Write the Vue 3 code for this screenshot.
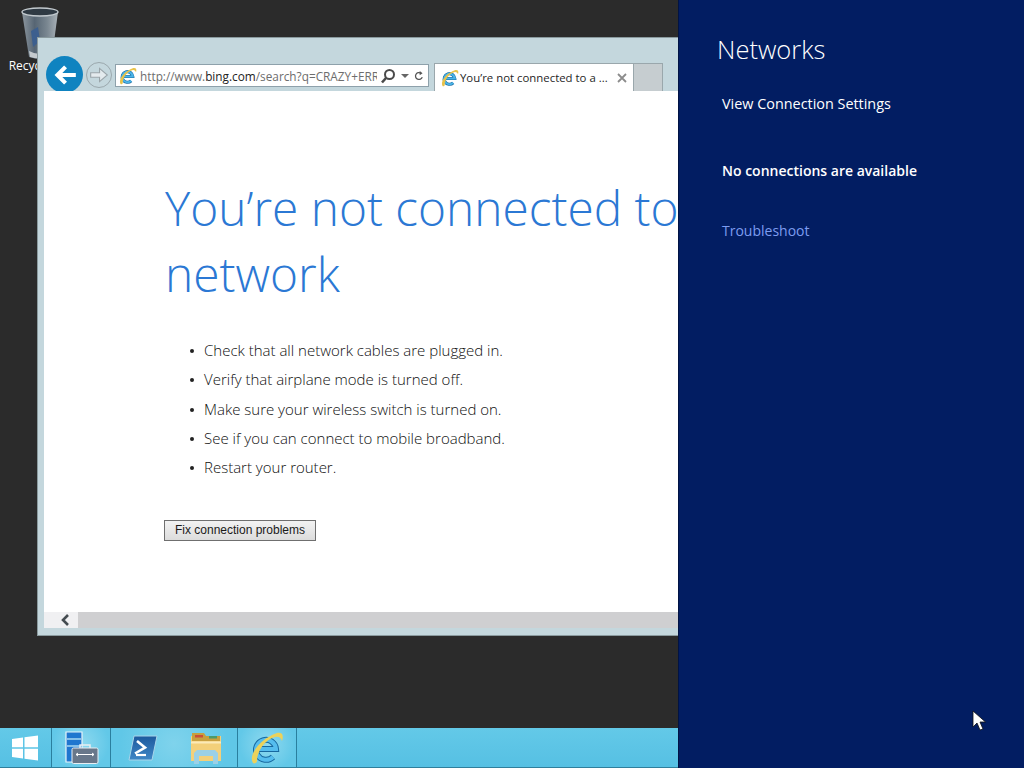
<template>
  <div class="screen">
    <div class="left">
      <main class="desktop">
        <div class="recycle">
          <svg width="40" height="52" viewBox="0 0 40 52">
            <defs>
              <linearGradient id="bin" x1="0" x2="1" y1="0" y2="0">
                <stop offset="0" stop-color="#8d979f"/><stop offset=".35" stop-color="#566573"/><stop offset=".7" stop-color="#7a8791"/><stop offset="1" stop-color="#aab2b8"/>
              </linearGradient>
            </defs>
            <path d="M2 5 L38 5 L32 50 Q20 54 9 50 Z" fill="url(#bin)"/>
            <ellipse cx="20" cy="5" rx="18" ry="4" fill="#2f3a44" stroke="#c2c9ce" stroke-width="1.4"/>
            <path d="M11 24 L18 20 L20 34 L13 40 Z" fill="#3c5f8e"/>
            <path d="M9 44 Q20 50 31 44 L30 50 Q20 53 10 50 Z" fill="#c4cace"/>
          </svg>
          <span class="recycle-label">Recycle Bin</span>
        </div>

        <section class="window">
          <div class="toolbar">
            <div class="back">
              <svg width="26" height="26" viewBox="0 0 24 24"><path d="M22 12H6M12.500 4.500 5 12l7.500 7.500" fill="none" stroke="#fff" stroke-width="3.800"/></svg>
            </div>
            <div class="forward">
              <svg width="20" height="20" viewBox="0 0 18 18"><path d="M1.500 7h8V3l7 6-7 6v-4h-8z" fill="#e4ebee" stroke="#9aa5aa" stroke-width="1"/></svg>
            </div>
            <div class="address">
              <svg class="ie" width="18" height="18" viewBox="0 0 34 34">
                <path d="M8 18h18a10 10 0 1 0-3 8" fill="none" stroke="#17689f" stroke-width="6"/>
                <path d="M8 18h18a10 10 0 1 0-3 8" fill="none" stroke="#4ab4e8" stroke-width="4"/>
                <path d="M3 32C-2 25 9 8 27 2c5-1 7 2 5 8-1-3-3-5-7-4C14 9 7 21 7 30c0 2-3 3-4 2Z" fill="#e8c34a"/>
              </svg>
              <span class="url">http://www.<b>bing.com</b>/search?q=CRAZY+ERROR</span>
              <svg class="mag" width="16" height="16" viewBox="0 0 16 16"><circle cx="9.500" cy="6.500" r="4.500" fill="none" stroke="#4a4a4a" stroke-width="2"/><path d="M6 10 2 14.500" stroke="#4a4a4a" stroke-width="2.600"/></svg>
              <span class="caret"></span>
              <svg width="14" height="14" viewBox="0 0 14 14"><path d="M11.500 8.500A4.800 4.800 0 1 1 9.500 3" fill="none" stroke="#555" stroke-width="1.800"/><path d="M8 0v6l4-3z" fill="#555"/></svg>
            </div>
            <div class="tab">
              <svg class="ie" width="18" height="18" viewBox="0 0 34 34">
                <path d="M8 18h18a10 10 0 1 0-3 8" fill="none" stroke="#17689f" stroke-width="6"/>
                <path d="M8 18h18a10 10 0 1 0-3 8" fill="none" stroke="#4ab4e8" stroke-width="4"/>
                <path d="M3 32C-2 25 9 8 27 2c5-1 7 2 5 8-1-3-3-5-7-4C14 9 7 21 7 30c0 2-3 3-4 2Z" fill="#e8c34a"/>
              </svg>
              <span class="tab-title">You’re not connected to a ...</span>
              <svg width="10" height="10" viewBox="0 0 10 10"><path d="M1 1l8 8M9 1 1 9" stroke="#8c8c8c" stroke-width="1.800"/></svg>
            </div>
            <div class="newtab"></div>
          </div>

          <div class="page">
            <h1>You’re not connected to a network</h1>
            <ul>
              <li v-for="tip in tips" :key="tip">{{ tip }}</li>
            </ul>
            <button class="fix">Fix connection problems</button>
          </div>

          <div class="scrollbar">
            <div class="scroll-left">
              <svg width="10" height="12" viewBox="0 0 10 12"><path d="M8 1 3 6l5 5" fill="none" stroke="#444b50" stroke-width="2.600"/></svg>
            </div>
            <div class="scroll-track"></div>
          </div>
        </section>
      </main>

      <footer class="taskbar">
        <div class="task start">
          <svg width="28" height="28" viewBox="0 0 28 28"><path d="M1 5 12 3.500V13.300H1zM13.500 3.300 27 1.500V13.300H13.500zM1 14.800H12V24.500L1 23zM13.500 14.800H27V26.500L13.500 24.700z" fill="#fff"/></svg>
        </div>
        <div class="task server">
          <svg width="34" height="34" viewBox="0 0 34 34">
            <path d="M1 1h16v30H1z" fill="#1f76cf" stroke="#e6f3fa" stroke-width="1.200"/>
            <path d="M2 8h14M2 15h14" stroke="#a6d8f2" stroke-width="1.400"/>
            <rect x="7" y="17" width="26" height="15.500" rx="1.500" fill="#68778a" stroke="#e8eef2" stroke-width="1"/>
            <path d="M15 17v-3h10v3" fill="none" stroke="#e8eef2" stroke-width="1.500"/>
            <path d="M11 23.500h18M11 23.500l2-1.500M11 23.500l2 1.500M29 23.500l-2-1.500M29 23.500l-2 1.500" stroke="#fff" stroke-width="1" fill="none"/>
          </svg>
        </div>
        <div class="task group">
          <svg width="30" height="26" viewBox="0 0 30 26">
            <defs>
              <linearGradient id="ps" x1="0" x2="0" y1="0" y2="1"><stop offset="0" stop-color="#1d5a9e"/><stop offset="1" stop-color="#3f87c6"/></linearGradient>
            </defs>
            <path d="M6 1h23l-5 24H1z" fill="url(#ps)" stroke="#a9d5ea" stroke-width="1"/>
            <path d="M9 6l8 6.500-10 6" fill="none" stroke="#fff" stroke-width="2.600"/>
            <path d="M8 20h10" stroke="#fff" stroke-width="2.200"/>
          </svg>
          <svg width="32" height="32" viewBox="0 0 32 32">
            <path d="M1 4h30v25H1z" fill="#f3d07a"/>
            <path d="M2 1h12l2 3h14v5H2z" fill="#c79f3f"/>
            <rect x="5" y="3" width="8" height="2.500" fill="#c94f3a"/>
            <rect x="19" y="4" width="8" height="2.500" fill="#4c9a6a"/>
            <path d="M1 10.500h30" stroke="#fbeab8" stroke-width="2"/>
            <path d="M4 32V21l3-3h18l3 3v11h-5v-8H9v8z" fill="#9bd0e6"/>
          </svg>
        </div>
        <div class="task ie-task">
          <svg width="34" height="34" viewBox="0 0 34 34">
            <path d="M8 18h18a10 10 0 1 0-3 8" fill="none" stroke="#17689f" stroke-width="6"/>
            <path d="M8 18h18a10 10 0 1 0-3 8" fill="none" stroke="#55bdee" stroke-width="4"/>
            <path d="M3 32C-2 25 9 8 27 2c5-1 7 2 5 8-1-3-3-5-7-4C14 9 7 21 7 30c0 2-3 3-4 2Z" fill="#edd25a"/>
          </svg>
        </div>
      </footer>
    </div>

    <aside class="charm">
      <h2>Networks</h2>
      <a class="settings">View Connection Settings</a>
      <p class="status">No connections are available</p>
      <a class="troubleshoot">Troubleshoot</a>
      <svg class="cursor" width="14" height="22" viewBox="0 0 14 22"><path d="M1 1v16l4-4 3 7 3-1-3-7h5.500z" fill="#fff" stroke="#111" stroke-width=".8"/></svg>
    </aside>
  </div>
</template>

<script setup>
const tips = [
  'Check that all network cables are plugged in.',
  'Verify that airplane mode is turned off.',
  'Make sure your wireless switch is turned on.',
  'See if you can connect to mobile broadband.',
  'Restart your router.'
]
</script>

<style>
html, body { margin: 0; background: #2b2b2b; overflow: hidden; }
</style>

<style scoped>
.screen {
  width: 1024px;
  height: 768px;
  display: flex;
  overflow: hidden;
  font-family: "Open Sans", "Noto Sans", sans-serif;
}
.left {
  width: 678px;
  flex: none;
  display: flex;
  flex-direction: column;
}
.desktop {
  flex: 1;
  position: relative;
  background: #2b2b2b;
  overflow: hidden;
}
.recycle {
  position: absolute;
  left: 2px;
  top: 7px;
  width: 76px;
  display: flex;
  flex-direction: column;
  align-items: center;
  color: #fff;
  font-size: 12px;
}
.recycle-label { margin-top: -2px; white-space: nowrap; }
.window {
  position: absolute;
  left: 37px;
  top: 37px;
  width: 660px;
  height: 599px;
  box-sizing: border-box;
  background: #c4d7dd;
  border: 1px solid #8a9a9e;
  border-right: 0;
  padding: 0 0 7px 6px;
  display: flex;
  flex-direction: column;
}
.toolbar {
  height: 53px;
  flex: none;
  position: relative;
}
.back {
  position: absolute;
  left: 2px;
  top: 18px;
  width: 37px;
  height: 37px;
  border-radius: 50%;
  background: #0f83c0;
  display: flex;
  align-items: center;
  justify-content: center;
  clip-path: inset(0 0 2px 0);
}
.forward {
  position: absolute;
  left: 42px;
  top: 24px;
  width: 26px;
  height: 26px;
  box-sizing: border-box;
  border: 1px solid #9ba8ad;
  border-radius: 50%;
  display: flex;
  align-items: center;
  justify-content: center;
}
.address {
  position: absolute;
  left: 71px;
  top: 26px;
  width: 314px;
  height: 23px;
  box-sizing: border-box;
  border: 1px solid #8ea1ab;
  background: #fff;
  display: flex;
  align-items: center;
  padding: 0 4px 0 3px;
}
.address .ie { flex: none; margin-right: 3px; }
.url {
  width: 237px;
  flex: none;
  overflow: hidden;
  white-space: nowrap;
  font-size: 11.800px;
  color: #6d6d6d;
  margin-right: 3px;
}
.url b { color: #222; font-weight: 400; }
.mag { flex: none; margin-right: 0; }
.caret {
  width: 0;
  height: 0;
  margin: 1px 5px 0 5px;
  border-left: 4px solid transparent;
  border-right: 4px solid transparent;
  border-top: 4px solid #666;
}
.tab {
  position: absolute;
  left: 390px;
  top: 25px;
  width: 200px;
  height: 28px;
  box-sizing: border-box;
  background: #fff;
  border: 1px solid #9aa7ac;
  border-bottom: 0;
  display: flex;
  align-items: center;
  padding: 0 6px 0 6px;
}
.tab .ie { flex: none; margin-right: 1px; }
.tab-title {
  font-size: 11.400px;
  color: #1f1f1f;
  white-space: nowrap;
  flex: 1;
}
.newtab {
  position: absolute;
  left: 590px;
  top: 25px;
  width: 29px;
  height: 28px;
  box-sizing: border-box;
  background: #c6cdd0;
  border: 1px solid #9aa7ac;
  border-left: 0;
  border-bottom: 0;
}
.page {
  flex: 1;
  background: #fff;
  overflow: hidden;
  padding: 0 0 0 120px;
  min-height: 0;
  position: relative;
}
h1 {
  margin: 84px 0 0 1px;
  width: 560px;
  font-size: 47.800px;
  font-weight: 300;
  line-height: 66px;
  color: #2b78d4;
}
ul {
  list-style: none;
  margin: 29px 0 0;
  padding: 0 0 0 40px;
  font-size: 15px;
  font-weight: 300;
  color: #0f0f0f;
}
li {
  height: 29.250px;
  line-height: 29.250px;
  position: relative;
  white-space: nowrap;
}
li::before {
  content: "";
  position: absolute;
  left: -14px;
  top: 13px;
  width: 4px;
  height: 4px;
  border-radius: 50%;
  background: #222;
}
.fix {
  display: block;
  margin-top: 38px;
  width: 152px;
  height: 21px;
  padding: 0 0 2px;
  box-sizing: border-box;
  border: 1px solid #6f6f6f;
  background: linear-gradient(#f2f2f2, #dcdcdc);
  font-family: "Liberation Sans", Arial, sans-serif;
  font-size: 12px;
  color: #1a1a1a;
}
.scrollbar {
  height: 16px;
  flex: none;
  display: flex;
  background: #cfcfd1;
}
.scroll-left {
  width: 34px;
  background: #f0f0f2;
  display: flex;
  align-items: center;
  justify-content: flex-end;
  padding-right: 8px;
  box-sizing: border-box;
}
.scroll-track { flex: 1; background: #cfcfd1; }
.taskbar {
  height: 40px;
  flex: none;
  background: linear-gradient(#63c9e8, #56c0e3);
  display: flex;
  border-bottom: 1px solid #2f7f9c;
  box-sizing: border-box;
}
.task {
  box-sizing: border-box;
  display: flex;
  align-items: center;
  justify-content: center;
  height: 100%;
  border-right: 1px solid #2a7f9e;
}
.start { width: 52px; padding-right: 1px; }
.server { width: 59px; background: radial-gradient(circle at 50% 40%, #8fd9ef, #62c8e8 75%); padding-left: 2px; }
.group {
  width: 127px;
  gap: 32px;
  padding-left: 2px;
  background: radial-gradient(circle at 50% 40%, #7fd3ec, #60c7e7 80%);
}
.ie-task { width: 59px; background: radial-gradient(circle at 50% 40%, #8fd9ef, #62c8e8 75%); }
.charm {
  flex: 1;
  position: relative;
  background: #021d62;
  color: #fff;
  padding: 0 0 0 39px;
  box-shadow: inset 1px 0 0 #011344;
}
h2 {
  margin: 32px 0 0;
  font-size: 25.500px;
  font-weight: 300;
  line-height: 34px;
}
.settings, .status, .troubleshoot {
  display: block;
  margin-left: 5px;
  font-size: 14.400px;
  line-height: 20px;
}
.settings { margin-top: 28px; }
.status { margin-top: 47px; margin-bottom: 0; font-weight: 600; font-size: 14px; }
.troubleshoot { margin-top: 40px; color: #7d9cf0; font-size: 14px; }
.cursor {
  position: absolute;
  left: 294px;
  top: 710px;
}
</style>
